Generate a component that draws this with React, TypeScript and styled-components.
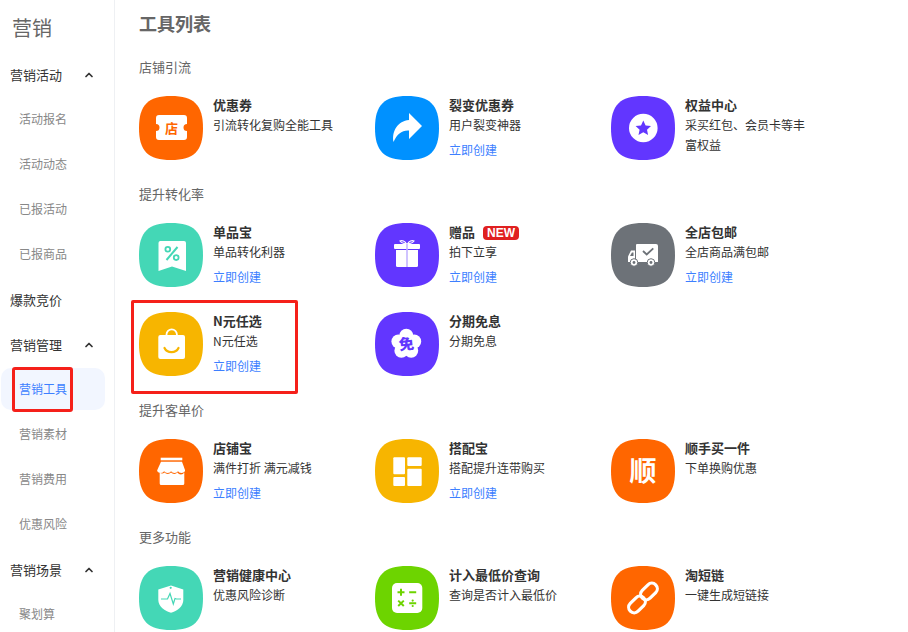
import { styled, createGlobalStyle } from "styled-components";
import { ChevronUp } from "lucide-react";
import type { ReactNode } from "react";

const GlobalStyle = createGlobalStyle`
  html, body {
    margin: 0;
    padding: 0;
    background: #fff;
  }
  body {
    font-family: "Noto Sans CJK SC", "Liberation Sans", sans-serif;
  }
`;

const Page = styled.div`
  display: flex;
  width: 908px;
  height: 632px;
  overflow: hidden;
  background: #fff;
`;

const Sidebar = styled.nav`
  flex: 0 0 115px;
  box-sizing: border-box;
  border-right: 1px solid #eef0f3;
  padding-left: 1px;
`;

const SideTitle = styled.div`
  height: 52px;
  padding: 6px 0 0 11px;
  box-sizing: border-box;
  font-size: 20px;
  line-height: 43px;
  color: #666;
`;

const MenuBlock = styled.div`
  display: flex;
  flex-direction: column;
`;

const Group = styled.div`
  display: flex;
  align-items: center;
  height: 45px;
  padding-left: 9px;
  font-size: 13px;
  color: #333;
  svg {
    margin-left: 21px;
  }
`;

const SubItem = styled.div<{ $active?: boolean }>`
  position: relative;
  display: flex;
  align-items: center;
  width: 104px;
  height: 42px;
  margin: 1px 0 2px;
  padding: 0 0 2px 18px;
  box-sizing: border-box;
  border-radius: 10px;
  font-size: 12px;
  color: ${(p) => (p.$active ? "#3d7fff" : "#888")};
  background: ${(p) => (p.$active ? "#f2f6ff" : "transparent")};
`;

const SideMark = styled.span`
  position: absolute;
  left: 11px;
  top: -1px;
  width: 61px;
  height: 45px;
  box-sizing: border-box;
  border: 3px solid #f5201a;
  border-radius: 3px;
`;

const Main = styled.main`
  flex: 1;
  padding: 12px 0 0 24px;
`;

const Title = styled.h1`
  margin: 0 0 22px;
  font-size: 18px;
  line-height: 24px;
  height: 24px;
  font-weight: 700;
  color: #666;
  transform: translateY(-1px);
`;

const Section = styled.section`
  margin-bottom: 25px;
`;

const SectionLabel = styled.div`
  height: 20px;
  margin-bottom: 18px;
  font-size: 13px;
  line-height: 18px;
  color: #666;
`;

const ToolGrid = styled.div`
  display: grid;
  grid-template-columns: repeat(3, 236px);
  row-gap: 25px;
`;

const Tool = styled.div`
  position: relative;
  display: flex;
  height: 64px;
  gap: 10px;
`;

const ToolMark = styled.span`
  position: absolute;
  left: -8px;
  top: -12px;
  width: 167px;
  height: 94px;
  box-sizing: border-box;
  border: 3px solid #f5201a;
  border-radius: 2px;
`;

const ToolIcon = styled.svg`
  flex: 0 0 64px;
  width: 64px;
  height: 64px;
`;

const ToolBody = styled.div`
  width: 130px;
`;

const ToolName = styled.div`
  display: flex;
  align-items: center;
  gap: 8px;
  height: 19px;
  font-size: 13px;
  line-height: 19px;
  font-weight: 700;
  color: #333;
  white-space: nowrap;
`;

const ToolNameText = styled.span`
  display: block;
  height: 18px;
  line-height: 18px;
  margin-bottom: 1px;
`;

const ToolDesc = styled.div`
  font-size: 12px;
  line-height: 20px;
  color: #333;
`;

const ToolLink = styled.a`
  display: block;
  margin-top: 5px;
  font-size: 12px;
  line-height: 20px;
  color: #3d7fff;
`;

const NewBadge = styled.span`
  width: 36px;
  height: 14px;
  border-radius: 4px;
  background: #e02020;
  color: #fff;
  font-family: "Liberation Sans", sans-serif;
  font-size: 12px;
  line-height: 14px;
  font-weight: 700;
  text-align: center;
`;

const ORANGE = "#ff6600";
const BLUE = "#0091ff";
const PURPLE = "#6236ff";
const TEAL = "#44d7b6";
const GRAY = "#6d7278";
const YELLOW = "#f7b500";
const GREEN = "#6dd400";

const Squircle = ({ color, children }: { color: string; children: ReactNode }) => (
  <ToolIcon viewBox="0 0 64 64">
    <path
      d="M32 0C55 0 64 9 64 32S55 64 32 64S0 55 0 32S9 0 32 0Z"
      fill={color}
    />
    {children}
  </ToolIcon>
);

const ticket = (
  <Squircle color={ORANGE}>
    <path
      d="M20 19H45a3 3 0 0 1 3 3V28a3.5 3.5 0 0 0 0 7V41a3 3 0 0 1-3 3H20a3 3 0 0 1-3-3V35a3.5 3.5 0 0 0 0-7V22a3 3 0 0 1 3-3Z"
      fill="#fff"
    />
    <text x="32.5" y="37" fontSize="13" fontWeight="700" fill={ORANGE} textAnchor="middle">店</text>
  </Squircle>
);

const share = (
  <Squircle color={BLUE}>
    <path
      d="M34 17L47 30L34 43V34.5C27 34 22 38 18.5 46C16.5 35 23 25 34 24Z"
      fill="#fff"
    />
  </Squircle>
);

const starBadge = (
  <Squircle color={PURPLE}>
    <circle cx="32.3" cy="32" r="14.3" fill="#fff" />
    <path
      d="M32.3 24.5L34.6 29.4L40 30L36 33.7L37.1 39L32.3 36.3L27.5 39L28.6 33.7L24.6 30L30 29.4Z"
      fill={PURPLE}
    />
  </Squircle>
);

const percent = (
  <Squircle color={TEAL}>
    <path
      d="M21 18H45a2 2 0 0 1 2 2V48L33 43.6L19.5 48V20a2 2 0 0 1 1.5-2Z"
      fill="#fff"
    />
    <path d="M38.5 24L27.5 37" stroke={TEAL} strokeWidth="2" fill="none" />
    <circle cx="28.8" cy="26.2" r="2.4" stroke={TEAL} strokeWidth="1.8" fill="none" />
    <circle cx="37.2" cy="34.6" r="2.4" stroke={TEAL} strokeWidth="1.8" fill="none" />
  </Squircle>
);

const gift = (
  <Squircle color={PURPLE}>
    <path
      d="M31.5 21C28.5 20.5 26 19.5 25 18C27 17 30 18 31.5 21ZM32.5 21C35.5 20.5 38 19.5 39 18C37 17 34 18 32.5 21Z"
      stroke="#fff"
      strokeWidth="1.2"
      fill="none"
    />
    <rect x="19" y="21" width="26" height="5" rx="1" fill="#fff" />
    <path d="M21 27H43V42.5a1.5 1.5 0 0 1-1.5 1.5H22.5a1.5 1.5 0 0 1-1.5-1.5Z" fill="#fff" />
    <rect x="31.2" y="21" width="1.6" height="23" fill="#c4b5ff" />
  </Squircle>
);

const truck = (
  <Squircle color={GRAY}>
    <path d="M26 21H45a2 2 0 0 1 2 2V39H25V22a1 1 0 0 1 1-1Z" fill="#fff" />
    <path d="M24 27.5V39H17V33.5L20 27.5Z" fill="#fff" />
    <path d="M19 33L21 29.5H22.5V33Z" fill={GRAY} />
    <path d="M32 28L35.7 31.5L42.3 25.3" stroke={GRAY} strokeWidth="1.8" fill="none" />
    <circle cx="23" cy="39.5" r="3.8" fill="#fff" stroke={GRAY} strokeWidth="1" />
    <circle cx="23" cy="39.5" r="1.4" fill={GRAY} />
    <circle cx="40" cy="39.5" r="3.8" fill="#fff" stroke={GRAY} strokeWidth="1" />
    <circle cx="40" cy="39.5" r="1.4" fill={GRAY} />
  </Squircle>
);

const bag = (
  <Squircle color={YELLOW}>
    <path d="M27.5 24V22.5a5.2 5.2 0 0 1 10.4 0V24" stroke="#fff" strokeWidth="1.8" fill="none" />
    <rect x="19.3" y="23" width="26.7" height="24" rx="2" fill="#fff" />
    <path d="M25.5 36C28 41.5 37 41.5 39.5 36" stroke={YELLOW} strokeWidth="2.2" strokeLinecap="round" fill="none" />
  </Squircle>
);

const flower = (
  <Squircle color={PURPLE}>
    <circle cx="31.3" cy="23.8" r="7" fill="#fff" />
    <circle cx="39.2" cy="29.5" r="7" fill="#fff" />
    <circle cx="36.2" cy="38.8" r="7" fill="#fff" />
    <circle cx="26.4" cy="38.8" r="7" fill="#fff" />
    <circle cx="23.4" cy="29.5" r="7" fill="#fff" />
    <circle cx="31.3" cy="32" r="8" fill="#fff" />
    <text
      x="31.3"
      y="37.5"
      fontSize="15"
      fontWeight="900"
      fill={PURPLE}
      textAnchor="middle"
      transform="rotate(-6 31.3 32)"
    >
      免
    </text>
  </Squircle>
);

const shop = (
  <Squircle color={ORANGE}>
    <rect x="21.7" y="18.7" width="21.6" height="2.6" fill="#fff" />
    <path d="M22 22.8H43L46 31V32.5H18.3V31Z" fill="#fff" />
    <path
      d="M20.7 33.5V44.5a1.5 1.5 0 0 0 1.5 1.5H43.8a1.5 1.5 0 0 0 1.5-1.5V33.5A4 4 0 0 1 38.5 33.5A4.5 4.5 0 0 1 32 33.5A4.5 4.5 0 0 1 25.5 33.5A4 4 0 0 1 20.7 33.5Z"
      fill="#fff"
    />
    <path
      d="M18.3 31.5a3.6 3.6 0 0 0 6.9 0a3.6 3.6 0 0 0 6.9 0a3.6 3.6 0 0 0 6.9 0a3.6 3.6 0 0 0 6.9 0Z"
      fill="#fff"
    />
  </Squircle>
);

const blocks = (
  <Squircle color={YELLOW}>
    <rect x="18.3" y="18.3" width="11.7" height="17" rx="1" fill="#fff" />
    <rect x="18.3" y="38" width="11.7" height="9" rx="1" fill="#fff" />
    <rect x="32.3" y="18.3" width="14.4" height="8.7" rx="1" fill="#fff" />
    <rect x="32.3" y="29.7" width="14.4" height="17.3" rx="1" fill="#fff" />
  </Squircle>
);

const shun = (
  <Squircle color={ORANGE}>
    <text x="32" y="42" fontSize="27" fontWeight="700" fill="#fff" textAnchor="middle">顺</text>
  </Squircle>
);

const shield = (
  <Squircle color={TEAL}>
    <path
      d="M32 19.5L44.3 23.5V34C44.3 40.5 38 45 32 46.8C26 45 19.3 40.5 19.3 34V23.5Z"
      fill="#fff"
    />
    <circle cx="31.7" cy="21.8" r="1.1" fill={TEAL} />
    <path
      d="M22 33H28.5L31 27.5L34.3 38L36 32.5L37.5 33H42"
      stroke={TEAL}
      strokeWidth="1.2"
      fill="none"
    />
  </Squircle>
);

const calc = (
  <Squircle color={GREEN}>
    <rect x="17" y="17" width="30.3" height="30" rx="5" fill="#fff" />
    <path
      d="M22.5 26.3H29.5M26 22.8V29.8M34.2 26.3H41.2M23.2 34.6L28.8 40M28.8 34.6L23.2 40M34.2 37.3H41.2"
      stroke={GREEN}
      strokeWidth="2"
      fill="none"
    />
    <circle cx="37.7" cy="34.6" r="1.1" fill={GREEN} />
    <circle cx="37.7" cy="40" r="1.1" fill={GREEN} />
  </Squircle>
);

const chain = (
  <Squircle color={ORANGE}>
    <rect x="28.5" y="20" width="19" height="11" rx="5.5" transform="rotate(-45 38 25.5)" stroke="#fff" strokeWidth="3.2" fill="none" />
    <rect x="16.5" y="33" width="19" height="11" rx="5.5" transform="rotate(-45 26 38.5)" stroke="#fff" strokeWidth="3.2" fill="none" />
  </Squircle>
);

type ToolItem = {
  name: string;
  desc: string;
  icon: ReactNode;
  link?: boolean;
  isNew?: boolean;
  marked?: boolean;
};

const sections: { label: string; tools: ToolItem[] }[] = [
  {
    label: "店铺引流",
    tools: [
      { name: "优惠券", desc: "引流转化复购全能工具", icon: ticket },
      { name: "裂变优惠券", desc: "用户裂变神器", icon: share, link: true },
      { name: "权益中心", desc: "采买红包、会员卡等丰富权益", icon: starBadge },
    ],
  },
  {
    label: "提升转化率",
    tools: [
      { name: "单品宝", desc: "单品转化利器", icon: percent, link: true },
      { name: "赠品", desc: "拍下立享", icon: gift, link: true, isNew: true },
      { name: "全店包邮", desc: "全店商品满包邮", icon: truck, link: true },
      { name: "N元任选", desc: "N元任选", icon: bag, link: true, marked: true },
      { name: "分期免息", desc: "分期免息", icon: flower },
    ],
  },
  {
    label: "提升客单价",
    tools: [
      { name: "店铺宝", desc: "满件打折 满元减钱", icon: shop, link: true },
      { name: "搭配宝", desc: "搭配提升连带购买", icon: blocks, link: true },
      { name: "顺手买一件", desc: "下单换购优惠", icon: shun },
    ],
  },
  {
    label: "更多功能",
    tools: [
      { name: "营销健康中心", desc: "优惠风险诊断", icon: shield },
      { name: "计入最低价查询", desc: "查询是否计入最低价", icon: calc },
      { name: "淘短链", desc: "一键生成短链接", icon: chain },
    ],
  },
];

const menu: { group: string; collapsible?: boolean; items: string[] }[] = [
  { group: "营销活动", collapsible: true, items: ["活动报名", "活动动态", "已报活动", "已报商品"] },
  { group: "爆款竞价", items: [] },
  { group: "营销管理", collapsible: true, items: ["营销工具", "营销素材", "营销费用", "优惠风险"] },
  { group: "营销场景", collapsible: true, items: ["聚划算"] },
];

export default function App() {
  return (
    <Page>
      <GlobalStyle />
      <Sidebar>
        <SideTitle>营销</SideTitle>
        {menu.map((m) => (
          <MenuBlock key={m.group}>
            <Group>
              {m.group}
              {m.collapsible && <ChevronUp size={12} strokeWidth={3.5} />}
            </Group>
            {m.items.map((item) => (
              <SubItem key={item} $active={item === "营销工具"}>
                {item}
                {item === "营销工具" && <SideMark />}
              </SubItem>
            ))}
          </MenuBlock>
        ))}
      </Sidebar>
      <Main>
        <Title>工具列表</Title>
        {sections.map((s) => (
          <Section key={s.label}>
            <SectionLabel>{s.label}</SectionLabel>
            <ToolGrid>
              {s.tools.map((t) => (
                <Tool key={t.name}>
                  {t.marked && <ToolMark />}
                  {t.icon}
                  <ToolBody>
                    <ToolName>
                      <ToolNameText>{t.name}</ToolNameText>
                      {t.isNew && <NewBadge>NEW</NewBadge>}
                    </ToolName>
                    <ToolDesc>{t.desc}</ToolDesc>
                    {t.link && <ToolLink>立即创建</ToolLink>}
                  </ToolBody>
                </Tool>
              ))}
            </ToolGrid>
          </Section>
        ))}
      </Main>
    </Page>
  );
}
